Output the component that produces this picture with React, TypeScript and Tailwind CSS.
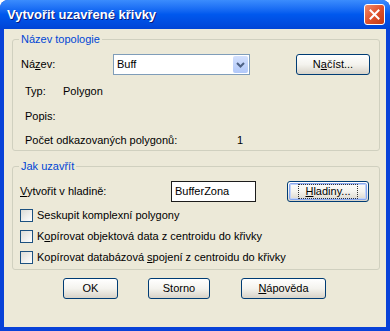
import React from 'react'

const font = { fontFamily: '"Liberation Sans", Tahoma, sans-serif' }

function XpButton({
  children,
  className = '',
  focused = false,
}: {
  children: React.ReactNode
  className?: string
  focused?: boolean
}) {
  return (
    <button
      className={`h-[21px] shrink-0 rounded-[3px] border border-[#003C74] bg-gradient-to-b from-white via-[#F4F3EE] to-[#D8D3C8] p-[1px] text-[11px] leading-[13px] text-black ${className}`}
    >
      <span
        className={`flex h-full w-full items-center justify-center rounded-[2px] ${
          focused ? 'border border-[#89A8EE] shadow-[inset_0_0_0_1px_#C2D3FA]' : ''
        }`}
      >
        <span className={focused ? 'px-[6px] outline outline-1 outline-dotted outline-[#333]' : ''}>
          {children}
        </span>
      </span>
    </button>
  )
}

function Checkbox({ children }: { children: React.ReactNode }) {
  return (
    <label className="flex h-[21px] items-center gap-[4px] pl-[7px]">
      <span className="h-[13px] w-[13px] shrink-0 border border-[#1C5180] bg-gradient-to-br from-[#DCDCD7] to-white" />
      <span>{children}</span>
    </label>
  )
}

export default function App() {
  return (
    <div className="h-[331px] w-[390px] bg-white" style={font}>
      <div className="flex h-full w-full flex-col overflow-hidden rounded-t-[8px] bg-[#0842D8]">
        {/* title bar */}
        <div className="flex h-[29px] shrink-0 items-center justify-between bg-gradient-to-b from-[#3B8CFD] via-[#0058EE] to-[#0044D6] pl-[7px] pr-[5px]">
          <span className="text-[13px] font-bold text-white [text-shadow:1px_1px_0_#0A1A7A]">
            Vytvořit uzavřené křivky
          </span>
          <div className="flex h-[21px] w-[21px] items-center justify-center rounded-[3px] border border-white bg-gradient-to-br from-[#F08A6A] via-[#E0522C] to-[#C23A12]">
            <svg width="11" height="11" viewBox="0 0 11 11">
              <path d="M1.5 1.5 L9.5 9.5 M9.5 1.5 L1.5 9.5" stroke="white" strokeWidth="2" strokeLinecap="square" />
            </svg>
          </div>
        </div>

        {/* body */}
        <div className="mx-[4px] mb-[4px] flex flex-1 flex-col bg-[#ECE9D8] text-[11px] leading-[13px] text-black">
          <fieldset className="ml-[8px] mt-[4px] w-[368px] rounded-[3px] border border-[#D0D0BF] pb-[3px]">
            <legend className="ml-[6px] px-[2px] text-[#0046D5]">Název topologie</legend>
            <div className="mt-[8px] flex items-center pl-[8px]">
              <span className="w-[92px]">
                Ná<u>z</u>ev:
              </span>
              <div className="flex h-[21px] w-[137px] items-center justify-between border border-[#7F9DB9] bg-white pl-[3px] pr-[1px]">
                <span>Buff</span>
                <span className="flex h-[17px] w-[15px] items-center justify-center rounded-[2px] bg-gradient-to-b from-[#D3E0FD] to-[#B1C8F9]">
                  <svg width="9" height="6" viewBox="0 0 9 6">
                    <path d="M1 1 L4.5 4.5 L8 1" stroke="#4D6185" strokeWidth="2" fill="none" />
                  </svg>
                </span>
              </div>
              <XpButton className="ml-[46px] w-[74px]">
                N<u>a</u>číst...
              </XpButton>
            </div>
            <div className="mt-[10px] flex pl-[12px]">
              <span className="w-[38px]">Typ:</span>
              <span>Polygon</span>
            </div>
            <div className="mt-[12px] pl-[12px]">Popis:</div>
            <div className="mt-[11px] flex pl-[12px]">
              <span className="w-[212px]">Počet odkazovaných polygonů:</span>
              <span>1</span>
            </div>
          </fieldset>

          <fieldset className="ml-[8px] mt-[9px] w-[368px] rounded-[3px] border border-[#D0D0BF] pb-[1px]">
            <legend className="ml-[6px] px-[2px] text-[#0046D5]">Jak uzavřít</legend>
            <div className="mt-[8px] flex items-center pl-[7px]">
              <span className="w-[151px]">
                <u>V</u>ytvořit v hladině:
              </span>
              <div className="flex h-[21px] w-[85px] items-center border border-[#1C1C1C] bg-white pl-[3px]">
                BufferZona
              </div>
              <XpButton className="ml-[31px] w-[82px]" focused>
                <u>H</u>ladiny...
              </XpButton>
            </div>
            <div className="mt-[3px] flex flex-col">
              <Checkbox>Seskupit komplexní polygony</Checkbox>
              <Checkbox>
                K<u>o</u>pírovat objektová data z centroidu do křivky
              </Checkbox>
              <Checkbox>
                Kopírovat databázová <u>s</u>pojení z centroidu do křivky
              </Checkbox>
            </div>
          </fieldset>

          <div className="mt-[8px] flex pl-[59px]">
            <XpButton className="w-[55px]">OK</XpButton>
            <XpButton className="ml-[30px] w-[62px]">Storno</XpButton>
            <XpButton className="ml-[31px] w-[85px]">
              <u>N</u>ápověda
            </XpButton>
          </div>
        </div>
      </div>
    </div>
  )
}
